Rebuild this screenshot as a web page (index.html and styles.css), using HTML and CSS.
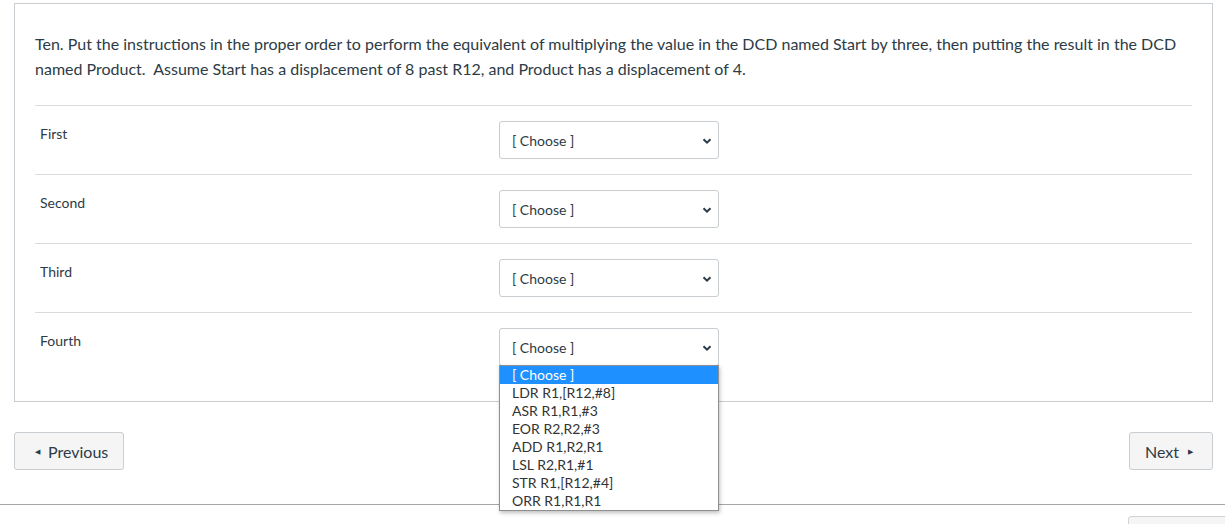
FILE: index.html
```html
<!DOCTYPE html>
<html lang="en">
<head>
<meta charset="utf-8">
<title>Quiz question</title>
<link rel="stylesheet" href="styles.css">
</head>
<body>
<div class="question">
  <p class="question-text">Ten. Put the instructions in the proper order to perform the equivalent of multiplying the value in the DCD named Start by three, then putting the result in the DCD named Product.&nbsp; Assume Start has a displacement of 8 past R12, and Product has a displacement of 4.</p>
  <div class="answers">
    <div class="row">
      <div class="label">First</div>
      <div class="select"><span>[ Choose ]</span><svg class="chev" viewBox="0 0 10 10" width="10" height="10"><path d="M1.5 3.2 L5 6.7 L8.5 3.2" fill="none" stroke="#2d3b45" stroke-width="2"/></svg></div>
    </div>
    <div class="row">
      <div class="label">Second</div>
      <div class="select"><span>[ Choose ]</span><svg class="chev" viewBox="0 0 10 10" width="10" height="10"><path d="M1.5 3.2 L5 6.7 L8.5 3.2" fill="none" stroke="#2d3b45" stroke-width="2"/></svg></div>
    </div>
    <div class="row">
      <div class="label">Third</div>
      <div class="select"><span>[ Choose ]</span><svg class="chev" viewBox="0 0 10 10" width="10" height="10"><path d="M1.5 3.2 L5 6.7 L8.5 3.2" fill="none" stroke="#2d3b45" stroke-width="2"/></svg></div>
    </div>
    <div class="row">
      <div class="label">Fourth</div>
      <div class="select-wrap">
        <div class="select"><span>[ Choose ]</span><svg class="chev" viewBox="0 0 10 10" width="10" height="10"><path d="M1.5 3.2 L5 6.7 L8.5 3.2" fill="none" stroke="#2d3b45" stroke-width="2"/></svg></div>
        <ul class="dropdown">
          <li class="active">[ Choose ]</li>
          <li>LDR R1,[R12,#8]</li>
          <li>ASR R1,R1,#3</li>
          <li>EOR R2,R2,#3</li>
          <li>ADD R1,R2,R1</li>
          <li>LSL R2,R1,#1</li>
          <li>STR R1,[R12,#4]</li>
          <li>ORR R1,R1,R1</li>
        </ul>
      </div>
    </div>
  </div>
</div>
<div class="nav">
  <button class="btn prev"><span class="tri">&#9664;</span>Previous</button>
  <button class="btn next">Next<span class="tri">&#9654;</span></button>
</div>
<div class="footer">
  <div class="footer-btn"></div>
</div>
</body>
</html>
```
FILE: styles.css
```css
html, body {
  margin: 0;
  padding: 0;
  background: #fff;
}
html {
  overflow: hidden;
}
body {
  font-family: Lato, "Open Sans", sans-serif;
  color: #2d3b45;
  overflow: hidden;
  height: 524px;
}
.question {
  margin: 3px 12px 0 14px;
  border: 1px solid #c7cdd1;
  padding: 27px 20px 20px 20px;
}
.question-text {
  margin: 0 0 24px 0;
  font-size: 16px;
  line-height: 25px;
}
.row {
  display: grid;
  grid-template-columns: 464px 220px;
  border-top: 1px solid #d8dcdf;
  padding: 15px 0;
}
.label {
  font-size: 14px;
  padding: 4px 0 0 5px;
  line-height: 18px;
}
.select-wrap {
  position: relative;
}
.select {
  box-sizing: border-box;
  height: 38px;
  border: 1px solid #c7cdd1;
  border-radius: 3px;
  display: flex;
  align-items: center;
  justify-content: space-between;
  padding: 0 6px 0 12px;
  font-size: 14px;
  background: #fff;
}
.chev {
  margin-top: 1px;
}
.dropdown {
  position: absolute;
  left: 0;
  top: 37px;
  width: 220px;
  box-sizing: border-box;
  margin: 0;
  padding: 0;
  list-style: none;
  background: #fff;
  border: 1px solid #8f8f8f;
  box-shadow: 1px 2px 4px rgba(0,0,0,0.25);
  font-size: 14px;
  color: #333;
  z-index: 5;
}
.dropdown li {
  height: 18px;
  line-height: 18px;
  padding-left: 12px;
}
.dropdown li.active {
  background: #1e90ff;
  color: #fff;
}
.nav {
  margin: 30px 12px 0 14px;
  display: flex;
  justify-content: space-between;
}
.btn {
  font-family: Lato, "Open Sans", sans-serif;
  font-size: 16px;
  color: #2d3b45;
  background: #f5f5f5;
  border: 1px solid #c7cdd1;
  border-radius: 3px;
  height: 38px;
  display: flex;
  align-items: center;
  padding: 0;
}
.prev {
  width: 110px;
  padding-left: 20px;
}
.next {
  width: 84px;
  padding-left: 15px;
}
.tri {
  font-size: 7px;
}
.prev .tri {
  margin-right: 8px;
}
.next .tri {
  margin-left: 9px;
}
.footer {
  margin-top: 34px;
  border-top: 1px solid #a6a6a6;
  height: 19px;
  position: relative;
  overflow: hidden;
}
.footer-btn {
  position: absolute;
  left: 1128px;
  top: 11px;
  width: 110px;
  height: 40px;
  border: 1px solid #d0d4d7;
  border-radius: 3px;
  background: #f5f5f5;
}
```
